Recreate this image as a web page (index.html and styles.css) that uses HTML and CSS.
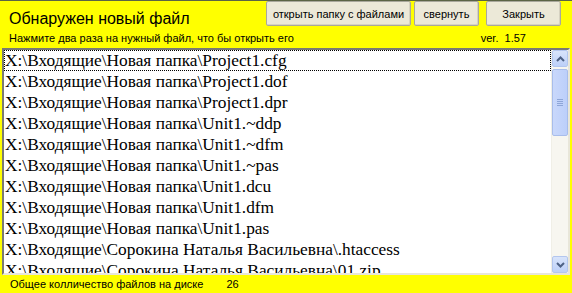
FILE: index.html
```html
<!DOCTYPE html>
<html>
<head>
<meta charset="utf-8" />
<title>Обнаружен новый файл</title>
<link rel="stylesheet" href="styles.css">
</head>
<body>
	<div id="window">
		<div id="header">
			<div id="title">Обнаружен новый файл</div>
			<div id="buttons">
				<button class="btn btn-open">открыть папку с файлами</button>
				<button class="btn btn-min">свернуть</button>
				<button class="btn btn-close">Закрыть</button>
			</div>
		</div>
		<div id="hint">
			<span>Нажмите два раза на нужный файл, что бы открыть его</span>
			<span id="ver">ver.&nbsp; 1.57</span>
		</div>
		<div id="list">
			<div id="list-items">
				<div class="item focus">X:\Входящие\Новая папка\Project1.cfg</div>
				<div class="item">X:\Входящие\Новая папка\Project1.dof</div>
				<div class="item">X:\Входящие\Новая папка\Project1.dpr</div>
				<div class="item">X:\Входящие\Новая папка\Unit1.~ddp</div>
				<div class="item">X:\Входящие\Новая папка\Unit1.~dfm</div>
				<div class="item">X:\Входящие\Новая папка\Unit1.~pas</div>
				<div class="item">X:\Входящие\Новая папка\Unit1.dcu</div>
				<div class="item">X:\Входящие\Новая папка\Unit1.dfm</div>
				<div class="item">X:\Входящие\Новая папка\Unit1.pas</div>
				<div class="item">X:\Входящие\Сорокина Наталья Васильевна\.htaccess</div>
				<div class="item">X:\Входящие\Сорокина Наталья Васильевна\01.zip</div>
			</div>
			<div id="scrollbar">
				<div class="sb-btn">
					<svg width="9" height="6" viewBox="0 0 9 6"><path d="M1 5 L4.5 1.5 L8 5" fill="none" stroke="#4d6185" stroke-width="2"/></svg>
				</div>
				<div class="sb-track">
					<div class="sb-thumb">
						<div class="grip"></div>
						<div class="grip"></div>
						<div class="grip"></div>
						<div class="grip"></div>
					</div>
				</div>
				<div class="sb-btn">
					<svg width="9" height="6" viewBox="0 0 9 6"><path d="M1 1 L4.5 4.5 L8 1" fill="none" stroke="#4d6185" stroke-width="2"/></svg>
				</div>
			</div>
		</div>
		<div id="footer">
			<span>Общее колличество файлов на диске</span>
			<span id="count">26</span>
		</div>
	</div>
</body>
</html>
```

FILE: styles.css
```css
* {
	margin: 0;
	padding: 0;
	box-sizing: border-box;
}
html,body {
	width: 100%;
	height: 100%;
	overflow: hidden;
}
body {
	background: #ffff00;
	font-family: "Liberation Sans", Arial, sans-serif;
	color: #000;
}
#window {
	display: flex;
	flex-direction: column;
	height: 293px;
	border-top: 1px solid #5b6445;
}
#header {
	height: 28px;
	display: flex;
	justify-content: space-between;
	align-items: flex-start;
}
#title {
	font-size: 16px;
	padding: 8px 0 0 9px;
	line-height: 20px;
	white-space: nowrap;
}
#buttons {
	display: flex;
	padding-right: 11px;
}
.btn {
	height: 25px;
	background: #ece9d8;
	border: 1px solid #a9a89c;
	border-radius: 2px;
	font-family: "Liberation Sans", Arial, sans-serif;
	font-size: 11px;
	color: #000;
	white-space: nowrap;
	box-shadow: inset -1px -1px 0 #d6d2c2;
}
.btn-open {
	width: 145px;
}
.btn-min {
	width: 65px;
	margin-left: 3px;
}
.btn-close {
	width: 75px;
	margin-left: 7px;
}
#hint {
	height: 19px;
	display: flex;
	font-size: 11px;
	line-height: 19px;
	padding: 0 0 0 9px;
	white-space: nowrap;
}
#ver {
	margin-left: auto;
	margin-right: 46px;
}
#list {
	height: 227px;
	margin: 0 2px 0 2px;
	background: #fff;
	border: 2px solid #7a7a74;
	border-right-color: #e8e6da;
	border-bottom-color: #e8e6da;
	display: flex;
	overflow: hidden;
}
#list-items {
	flex: 1;
	overflow: hidden;
	font-family: "Liberation Serif", "Times New Roman", serif;
	font-size: 17.33px;
}
.item {
	height: 21px;
	line-height: 21px;
	padding-left: 1px;
	white-space: nowrap;
}
.item.focus {
	outline: 1px dotted #000;
	outline-offset: -1px;
}
#scrollbar {
	width: 17px;
	display: flex;
	flex-direction: column;
	background: #f7f6f0;
	border-left: 1px solid #f0efe7;
}
.sb-btn {
	height: 17px;
	display: flex;
	align-items: center;
	justify-content: center;
	background: linear-gradient(#d8e4fb, #bdd0f8);
	border: 1px solid #b3c6ee;
	border-radius: 2px;
}
.sb-track {
	flex: 1;
	padding-top: 2px;
}
.sb-thumb {
	height: 67px;
	background: linear-gradient(90deg, #c9d8fb, #bccffa);
	border: 1px solid #a8bdeb;
	border-radius: 2px;
	display: flex;
	flex-direction: column;
	align-items: center;
	justify-content: center;
	gap: 1px;
}
.grip {
	width: 6px;
	height: 1px;
	background: #8ea6d8;
}
#footer {
	flex: 1;
	display: flex;
	align-items: center;
	font-size: 11px;
	padding-left: 10px;
	white-space: nowrap;
}
#count {
	margin-left: 23px;
}
```
